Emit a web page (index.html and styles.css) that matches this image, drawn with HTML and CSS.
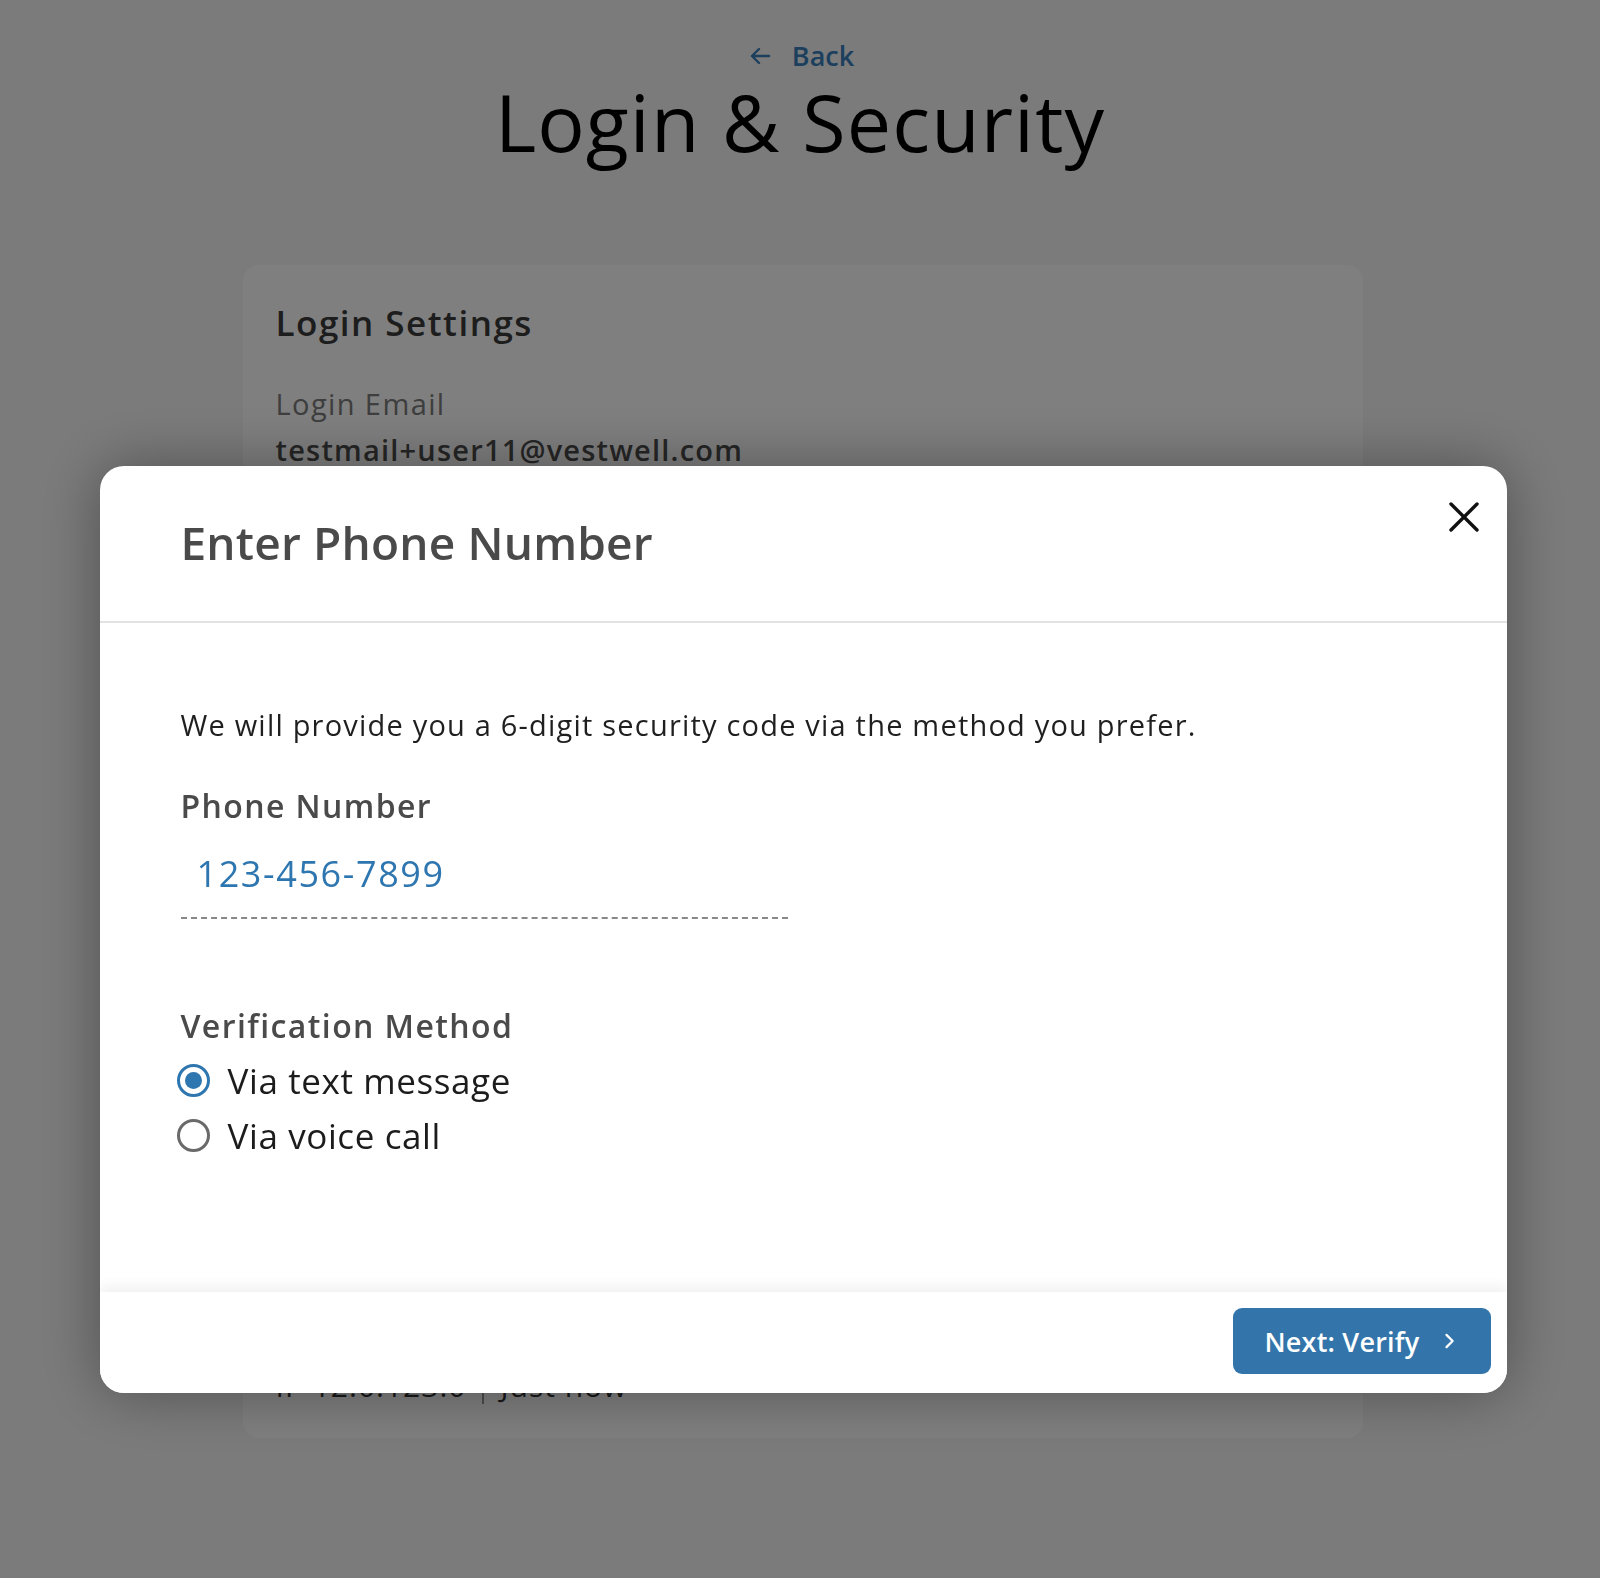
FILE: index.html
```html
<!DOCTYPE html>
<html lang="en">
<head>
<meta charset="utf-8">
<title>Login &amp; Security</title>
<link rel="stylesheet" href="styles.css">
</head>
<body>
<div class="page">
  <a class="back" href="#">
    <svg class="back-icon" viewBox="0 0 24 24" width="24" height="24"><path d="M21 12H4M11 5l-7 7 7 7" fill="none" stroke="currentColor" stroke-width="2.4" stroke-linecap="round" stroke-linejoin="round"/></svg>
    <span>Back</span>
  </a>
  <h1 class="page-title">Login &amp; Security</h1>

  <section class="card">
    <h2 class="card-title">Login Settings</h2>
    <div class="field">
      <div class="field-label">Login Email</div>
      <div class="field-value">testmail+user11@vestwell.com</div>
    </div>
    <div class="activity">
      <span>IP 12.0.123.0</span>
      <span class="sep"></span>
      <span>Just now</span>
    </div>
  </section>
</div>

<div class="overlay">
  <div class="modal" role="dialog">
    <div class="modal-header">
      <h2 class="modal-title">Enter Phone Number</h2>
      <button class="close" aria-label="Close">
        <svg viewBox="0 0 32 32" width="32" height="32"><path d="M3 3L29 29M29 3L3 29" stroke="#111" stroke-width="3.4" stroke-linecap="round"/></svg>
      </button>
    </div>
    <div class="modal-body">
      <p class="desc">We will provide you a 6-digit security code via the method you prefer.</p>
      <div class="label">Phone Number</div>
      <div class="phone-input">123-456-7899</div>
      <div class="label method-label">Verification Method</div>
      <div class="radio-group">
        <label class="radio-row">
          <span class="radio checked"></span>
          <span class="radio-text">Via text message</span>
        </label>
        <label class="radio-row">
          <span class="radio"></span>
          <span class="radio-text">Via voice call</span>
        </label>
      </div>
    </div>
    <div class="modal-footer">
      <button class="primary">
        <span>Next: Verify</span>
        <svg viewBox="0 0 16 20" width="14" height="18"><path d="M4 3l7 7-7 7" fill="none" stroke="#fff" stroke-width="2.6" stroke-linecap="round" stroke-linejoin="round"/></svg>
      </button>
    </div>
  </div>
</div>
</body>
</html>
```
FILE: styles.css
```css
* { box-sizing: border-box; }

html, body {
  margin: 0;
  padding: 0;
}

body {
  background: #f6f6f6;
  font-family: "Open Sans", "Noto Sans", sans-serif;
  color: #222;
  min-height: 1578px;
}

.page {
  display: flex;
  flex-direction: column;
  align-items: center;
  padding-top: 40px;
}

.back {
  display: flex;
  align-items: center;
  gap: 20px;
  color: #3a7fbd;
  text-decoration: none;
  font-size: 27px;
  font-weight: 600;
  line-height: 32px;
  margin-left: 2px;
}

.back-icon {
  width: 24px;
  height: 24px;
}

.page-title {
  margin: 8px 0 0;
  font-size: 79px;
  font-weight: 400;
  line-height: 84px;
  color: #000;
  letter-spacing: 1.1px;
}

.card {
  width: 1120px;
  height: 1173px;
  margin-top: 101px;
  margin-left: 5px;
  background: #fff;
  border-radius: 16px;
  padding: 36px 33px 34px;
  display: flex;
  flex-direction: column;
}

.card-title {
  margin: 0 0 40px;
  font-size: 35px;
  font-weight: 600;
  line-height: 44px;
  color: #3a3a3a;
  letter-spacing: 1.5px;
}

.field {
  margin-bottom: 40px;
}

.field-label {
  font-size: 29px;
  line-height: 38px;
  color: #7c7c7c;
  letter-spacing: 1.4px;
}

.field-value {
  font-size: 29px;
  font-weight: 600;
  line-height: 54px;
  color: #4c4c4c;
  letter-spacing: 1.2px;
}

.activity {
  margin-top: auto;
  display: flex;
  align-items: center;
  gap: 16px;
  font-size: 30px;
  line-height: 36px;
  color: #333;
  letter-spacing: 1px;
}

.activity .sep {
  width: 2px;
  height: 36px;
  background: #999;
}

/* overlay + modal */
.overlay {
  position: fixed;
  inset: 0;
  background: rgba(0, 0, 0, 0.5);
  display: flex;
  justify-content: center;
  align-items: flex-start;
  padding-top: 466px;
}

.modal {
  width: 1407px;
  height: 927px;
  margin-left: 6px;
  background: #fff;
  border-radius: 24px;
  box-shadow: 0 0 60px rgba(0, 0, 0, 0.35);
  display: flex;
  flex-direction: column;
  overflow: hidden;
}

.modal-header {
  position: relative;
  height: 157px;
  border-bottom: 2px solid #e2e2e2;
  padding: 46px 81px 0;
}

.modal-title {
  margin: 0;
  font-size: 46px;
  font-weight: 600;
  line-height: 60px;
  color: #4a4a4a;
  letter-spacing: 0.2px;
}

.close {
  position: absolute;
  top: 35px;
  right: 27px;
  width: 32px;
  height: 32px;
  padding: 0;
  border: 0;
  background: none;
  cursor: pointer;
}

.close svg { display: block; }

.modal-body {
  flex: 1;
  padding: 82px 81px 0;
}

.desc {
  margin: 0;
  font-size: 29px;
  line-height: 40px;
  color: #1f1f1f;
  letter-spacing: 1.2px;
}

.label {
  margin-top: 41px;
  font-size: 32px;
  font-weight: 600;
  line-height: 40px;
  color: #4a4a4a;
  letter-spacing: 1.4px;
}

.phone-input {
  width: 607px;
  margin-top: 25px;
  padding: 0 16px 20px;
  font-size: 36px;
  line-height: 46px;
  color: #2e76b0;
  border-bottom: 2px dashed #888;
  letter-spacing: 1.6px;
}

.method-label {
  margin-top: 87px;
}

.radio-group {
  margin-top: 7px;
  display: flex;
  flex-direction: column;
}

.radio-row {
  display: flex;
  align-items: center;
  gap: 18px;
  margin-left: -4px;
  height: 55px;
  cursor: pointer;
}

.radio {
  width: 33px;
  height: 33px;
  border-radius: 50%;
  border: 3px solid #6a6a6a;
  display: flex;
  align-items: center;
  justify-content: center;
  flex: none;
}

.radio.checked {
  border-color: #2e76b0;
}

.radio.checked::after {
  content: "";
  width: 17px;
  height: 17px;
  border-radius: 50%;
  background: #2e76b0;
}

.radio-text {
  font-size: 35px;
  line-height: 44px;
  color: #1c1c1c;
  letter-spacing: 0.6px;
}

.modal-footer {
  height: 101px;
  display: flex;
  justify-content: flex-end;
  align-items: flex-start;
  padding: 16px 16px 0;
  box-shadow: 0 -6px 12px rgba(0, 0, 0, 0.06);
  position: relative;
  background: #fff;
}

.primary {
  width: 258px;
  height: 66px;
  border: 0;
  border-radius: 9px;
  background: #3375aa;
  color: #fff;
  font-family: "Open Sans", "Noto Sans", sans-serif;
  font-size: 27px;
  font-weight: 600;
  letter-spacing: 0.2px;
  display: flex;
  align-items: center;
  justify-content: flex-start;
  gap: 24px;
  padding: 0 0 0 32px;
  cursor: pointer;
}

.primary svg { flex: none; }
```
